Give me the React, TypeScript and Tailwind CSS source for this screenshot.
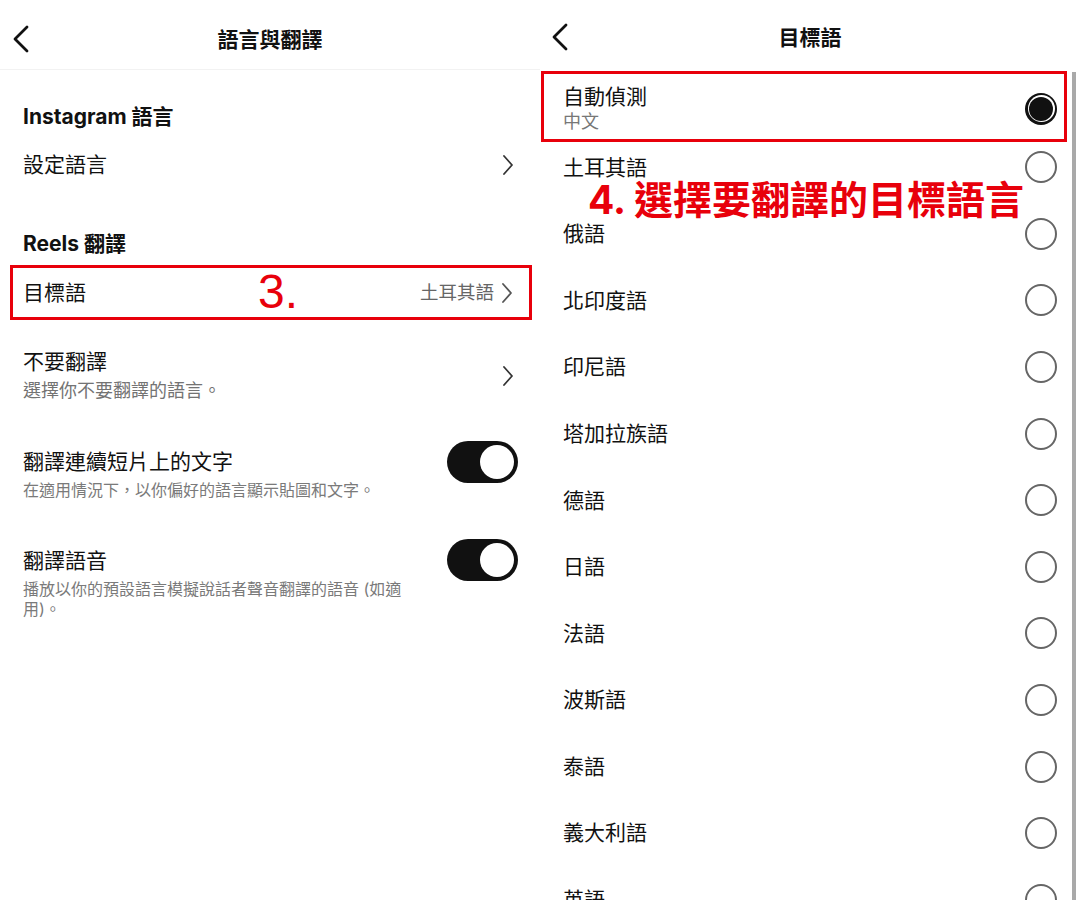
import React from 'react';

const font = { fontFamily: 'Inter, "Noto Sans CJK TC", sans-serif' };

function BackIcon() {
  return (
    <svg width="18" height="28" viewBox="0 0 18 28" fill="none">
      <path d="M15 2 L3 14 L15 26" stroke="#111" strokeWidth="2.8" strokeLinecap="round" strokeLinejoin="round" />
    </svg>
  );
}

function Chevron({ color = '#333' }: { color?: string }) {
  return (
    <svg width="12" height="22" viewBox="0 0 12 22" fill="none">
      <path d="M2 2 L10 11 L2 20" stroke={color} strokeWidth="1.8" strokeLinecap="round" strokeLinejoin="round" />
    </svg>
  );
}

function Toggle() {
  return (
    <div className="flex h-[42px] w-[71px] items-center justify-end rounded-full bg-[#111111] pr-[4px]">
      <div className="h-[34px] w-[34px] rounded-full bg-white" />
    </div>
  );
}

function Radio({ checked }: { checked?: boolean }) {
  if (checked) {
    return (
      <div className="flex h-[32px] w-[32px] items-center justify-center rounded-full bg-[#111111]">
        <div className="flex h-[27px] w-[27px] items-center justify-center rounded-full bg-white">
          <div className="h-[24px] w-[24px] rounded-full bg-[#111111]" />
        </div>
      </div>
    );
  }
  return <div className="h-[32px] w-[32px] rounded-full border-2 border-[#666666]" />;
}

const languages = ['土耳其語', '俄語', '北印度語', '印尼語', '塔加拉族語', '德語', '日語', '法語', '波斯語', '泰語', '義大利語', '英語'];

function SettingsPanel() {
  return (
    <div className="h-[900px] w-[540px] shrink-0 overflow-hidden bg-white">
      <div className="relative flex h-[70px] items-center justify-center border-b border-[#f2f2f2] pt-[10px]">
        <div className="absolute left-[12px] top-[25px]">
          <BackIcon />
        </div>
        <span className="text-[21px] font-bold text-[#111]">語言與翻譯</span>
      </div>

      <div className="mt-[32px] h-[30px] pl-[23px] text-[21px] font-bold leading-[30px] text-[#111]">Instagram 語言</div>
      <div className="mt-[8px] flex h-[50px] items-center justify-between pl-[23px] pr-[26px]">
        <span className="text-[21px] text-[#111]">設定語言</span>
        <Chevron />
      </div>

      <div className="mt-[39px] h-[30px] pl-[23px] text-[21px] font-bold leading-[30px] text-[#111]">Reels 翻譯</div>
      <div className="relative ml-[10px] mt-[6px] flex h-[55px] w-[522px] items-center justify-between border-[3px] border-[#e8000b] pl-[10px] pr-[16px]">
        <span className="text-[21px] text-[#111]">目標語</span>
        <div className="flex items-center gap-[7px]">
          <span className="text-[18.5px] text-[#666]">土耳其語</span>
          <Chevron color="#555" />
        </div>
        <span
          className="absolute left-[245px] top-0 text-[48px] leading-none text-[#e8000b]"
          style={{ fontFamily: '"Liberation Sans", Arial, sans-serif' }}
        >
          3.
        </span>
      </div>

      <div className="mt-[28px] flex items-center justify-between pl-[23px] pr-[26px]">
        <div>
          <div className="h-[28px] text-[21px] leading-[28px] text-[#111]">不要翻譯</div>
          <div className="mt-[2px] h-[26px] text-[18px] leading-[26px] text-[#737373]">選擇你不要翻譯的語言。</div>
        </div>
        <Chevron />
      </div>

      <div className="mt-[37px] flex items-start justify-between pl-[23px] pr-[22px]">
        <div className="pt-[7px]">
          <div className="h-[28px] text-[21px] leading-[28px] text-[#111]">翻譯連續短片上的文字</div>
          <div className="mt-[2px] h-[24px] text-[16px] leading-[24px] text-[#7a7a7a]">在適用情況下，以你偏好的語言顯示貼圖和文字。</div>
        </div>
        <Toggle />
      </div>

      <div className="mt-[37px] flex items-start justify-between pl-[23px] pr-[22px]">
        <div className="pt-[8px]">
          <div className="h-[28px] text-[21px] leading-[28px] text-[#111]">翻譯語音</div>
          <div className="mt-[4px] w-[386px] text-[16px] leading-[20px] text-[#7a7a7a]">播放以你的預設語言模擬說話者聲音翻譯的語音 (如適用)。</div>
        </div>
        <Toggle />
      </div>
    </div>
  );
}

function TargetPanel() {
  return (
    <div className="relative h-[900px] w-[540px] shrink-0 overflow-hidden bg-white">
      <div className="relative flex h-[70px] items-center justify-center pt-[6px]">
        <div className="absolute left-[11px] top-[23px]">
          <BackIcon />
        </div>
        <span className="text-[21px] font-bold text-[#111]">目標語</span>
      </div>

      <div className="relative flex h-[64px] items-center justify-between pl-[23px] pr-[23px] pt-[13px]">
        <div>
          <div className="h-[26px] text-[21px] leading-[26px] text-[#111]">自動偵測</div>
          <div className="h-[24px] text-[18px] leading-[24px] text-[#777]">中文</div>
        </div>
        <Radio checked />
        <div className="pointer-events-none absolute bottom-[-8px] left-[1px] right-[13px] top-[1px] border-[3px] border-[#e8000b]" />
      </div>

      {languages.map((lang) => (
        <div key={lang} className="flex h-[66.6px] items-center justify-between pl-[23px] pr-[23px]">
          <span className="text-[21px] text-[#111]">{lang}</span>
          <Radio />
        </div>
      ))}

      <div className="absolute left-[48px] top-[175px] text-[39px] font-bold leading-[50px] text-[#e8000b]">4. 選擇要翻譯的目標語言</div>
      <div className="absolute bottom-0 right-[4px] top-[72px] w-[4px] bg-[#a9a9a9]" />
    </div>
  );
}

export default function App() {
  return (
    <div className="flex h-[900px] w-[1080px] overflow-hidden bg-white" style={font}>
      <SettingsPanel />
      <TargetPanel />
    </div>
  );
}
